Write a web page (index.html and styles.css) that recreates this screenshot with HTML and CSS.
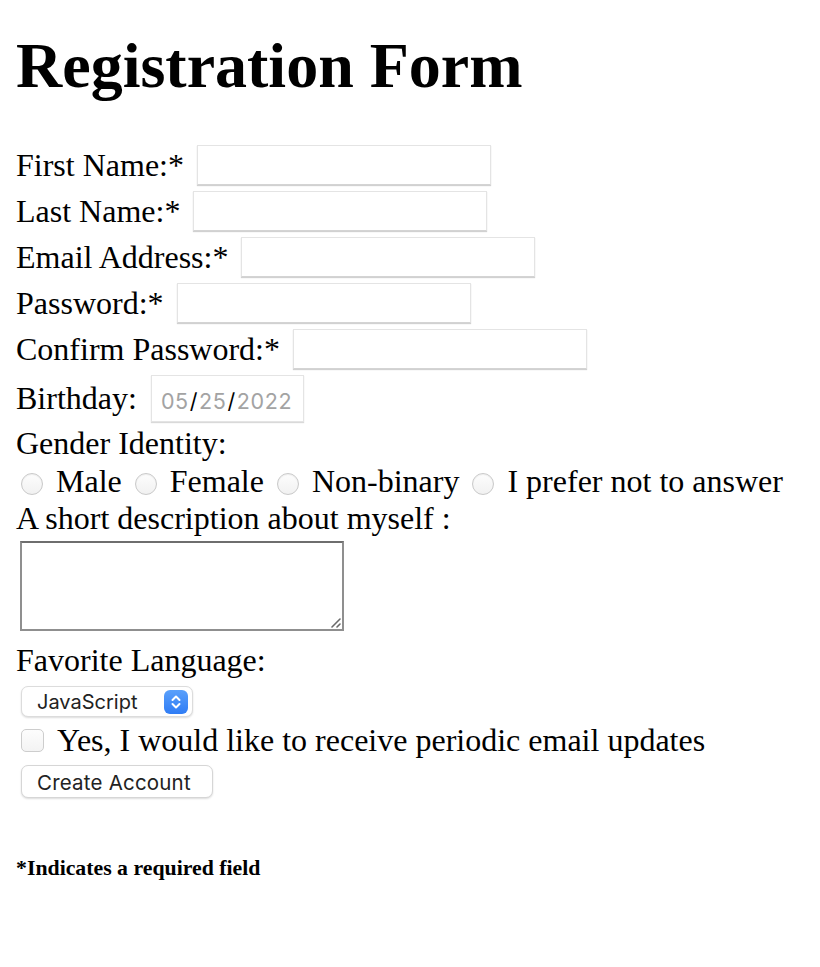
FILE: index.html
```html
<!DOCTYPE html>
<html lang="en">
<head>
<meta charset="utf-8">
<title>Registration Form</title>
<link rel="stylesheet" href="styles.css">
</head>
<body>
<h1 class="title">Registration Form</h1>
<form class="form">
  <div class="row"><label class="lbl" for="fn">First Name:*</label><input class="text-input" id="fn" type="text"></div>
  <div class="row"><label class="lbl" for="ln">Last Name:*</label><input class="text-input" id="ln" type="text"></div>
  <div class="row"><label class="lbl" for="em">Email Address:*</label><input class="text-input" id="em" type="text"></div>
  <div class="row"><label class="lbl" for="pw">Password:*</label><input class="text-input" id="pw" type="password"></div>
  <div class="row"><label class="lbl" for="cpw">Confirm Password:*</label><input class="text-input" id="cpw" type="password"></div>
  <div class="row row-date"><label class="lbl lbl-date" for="bd">Birthday:</label><div class="date-box" id="bd"><span class="dpart">05</span><span class="dsep">/</span><span class="dpart">25</span><span class="dsep">/</span><span class="dpart">2022</span></div></div>
  <div class="block-label lbl-gender">Gender Identity:</div>
  <div class="radio-row"><span class="radio"></span> Male <span class="radio"></span> Female <span class="radio"></span> Non-binary <span class="radio"></span> I prefer not to answer</div>
  <div class="block-label">A short description about myself :</div>
  <div class="textarea"><svg class="grip" width="12" height="12" viewBox="0 0 12 12"><path d="M11 3 L3 11 M11 8 L8 11" stroke="#6a6a6a" stroke-width="1.6" stroke-linecap="round"/></svg></div>
  <div class="block-label lbl-lang">Favorite Language:</div>
  <div class="select"><span class="select-text">JavaScript</span><span class="stepper"><svg width="24" height="24" viewBox="0 0 24 24"><path d="M8.5 10 L12 6.5 L15.5 10 M8.5 14 L12 17.5 L15.5 14" fill="none" stroke="#fff" stroke-width="2" stroke-linecap="round" stroke-linejoin="round"/></svg></span></div>
  <div class="check-row"><span class="checkbox"></span><span class="check-text">Yes, I would like to receive periodic email updates</span></div>
  <div class="button">Create Account</div>
</form>
<h6 class="note">*Indicates a required field</h6>
</body>
</html>
```
FILE: styles.css
```css
html, body {
  margin: 0;
  padding: 0;
  background: #fff;
}
body {
  padding: 0 16px;
  font-family: "Liberation Serif", "Times New Roman", serif;
  font-size: 32px;
  color: #000;
}
.title {
  font-size: 64px;
  font-weight: bold;
  margin: 29px 0 0;
  line-height: 74px;
}
.form {
  margin-top: 39px;
}
.row {
  display: flex;
  align-items: center;
  height: 46px;
  gap: 13px;
}
.lbl {
  line-height: 37px;
  white-space: nowrap;
}
.text-input {
  box-sizing: border-box;
  width: 294px;
  height: 40px;
  margin: 0;
  border: 1px solid #e4e4e4;
  border-bottom-color: #d4d4d4;
  box-shadow: 0 1px 1px rgba(0,0,0,0.18);
  background: #fff;
  outline: none;
}
.row-date {
  align-items: flex-start;
  height: 51px;
  gap: 14px;
}
.lbl-date {
  margin-top: 8px;
}
.date-box {
  box-sizing: border-box;
  margin-top: 3px;
  width: 153px;
  height: 47px;
  border: 1px solid #e4e4e4;
  box-shadow: 0 1px 1px rgba(0,0,0,0.15);
  display: flex;
  align-items: center;
  padding: 4px 0 0 9px;
  font-family: Inter, "Liberation Sans", sans-serif;
  font-size: 21.5px;
  letter-spacing: 0.6px;
}
.dpart {
  color: #a3a3a3;
}
.dsep {
  color: #000;
  margin: 0 1px;
}
.block-label {
  line-height: 37px;
  white-space: nowrap;
}
.lbl-gender {
  margin-top: 2px;
}
.radio-row {
  line-height: 38px;
  height: 38px;
  white-space: nowrap;
}
.radio {
  display: inline-block;
  box-sizing: border-box;
  width: 22px;
  height: 22px;
  margin: 0 5px;
  border-radius: 50%;
  border: 1px solid #c9c9c9;
  background: linear-gradient(#fdfdfd, #f1f1f1);
  box-shadow: inset 0 1px 1px rgba(0,0,0,0.06);
  vertical-align: -3px;
}
.textarea {
  position: relative;
  box-sizing: border-box;
  width: 324px;
  height: 90px;
  margin: 4px 0 0 4px;
  border: 2px solid #8f8f8f;
  border-top-color: #6e6e6e;
  background: #fff;
}
.grip {
  position: absolute;
  right: 1px;
  bottom: 1px;
}
.lbl-lang {
  margin-top: 11px;
}
.select {
  box-sizing: border-box;
  width: 172px;
  height: 31px;
  margin: 7px 0 0 5px;
  border: 1px solid #dcdcdc;
  border-radius: 7px;
  box-shadow: 0 1px 2px rgba(0,0,0,0.14);
  background: #fff;
  display: flex;
  align-items: center;
  justify-content: space-between;
  padding: 0 4px 0 15px;
}
.select-text {
  font-family: Inter, "Liberation Sans", sans-serif;
  font-size: 20px;
  color: #222;
}
.stepper {
  width: 24px;
  height: 24px;
  border-radius: 6px;
  background: linear-gradient(#5aa0fb, #2f7cf5);
  display: flex;
}
.check-row {
  display: flex;
  align-items: center;
  height: 37px;
  margin-top: 5px;
}
.checkbox {
  box-sizing: border-box;
  width: 23px;
  height: 23px;
  margin: 0 13px 0 5px;
  border: 1px solid #cdcdcd;
  border-radius: 5px;
  background: linear-gradient(#fdfdfd, #f3f3f3);
}
.check-text {
  line-height: 37px;
  white-space: nowrap;
}
.button {
  box-sizing: border-box;
  width: 192px;
  height: 33px;
  margin: 6px 0 0 5px;
  border: 1px solid #d6d6d6;
  border-radius: 7px;
  box-shadow: 0 1px 2px rgba(0,0,0,0.14);
  background: #fff;
  display: flex;
  align-items: center;
  padding: 1px 0 0 15px;
  font-family: Inter, "Liberation Sans", sans-serif;
  font-size: 20.5px;
  color: #222;
  letter-spacing: 0.2px;
}
.note {
  font-size: 21.8px;
  font-weight: bold;
  margin: 58px 0 0;
  line-height: 25px;
}
```
